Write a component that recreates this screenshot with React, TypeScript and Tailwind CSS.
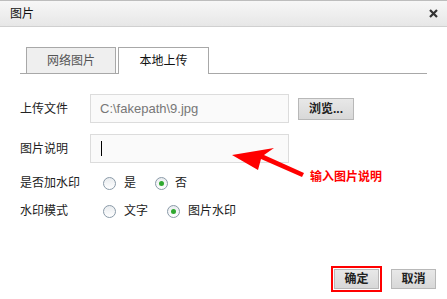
import React from 'react'

const font = { fontFamily: '"Liberation Sans", "Noto Sans CJK SC", sans-serif' }

function Radio({ checked }: { checked?: boolean }) {
  return (
    <span className="inline-flex h-[13px] w-[13px] items-center justify-center rounded-full border border-[#8a9aa8] bg-gradient-to-b from-[#e9ecef] to-white">
      {checked && <span className="h-[5px] w-[5px] rounded-full bg-[#2fa82f]" />}
    </span>
  )
}

function GrayButton({ children, className = '' }: { children: React.ReactNode; className?: string }) {
  return (
    <div className={`flex items-center justify-center border border-[#b8b8b8] bg-gradient-to-b from-[#e8e8e8] to-[#d8d8d8] text-[12px] font-bold text-[#222] ${className}`}>
      {children}
    </div>
  )
}

export default function App() {
  return (
    <div className="relative h-[299px] w-[447px] overflow-hidden bg-white text-[12px] text-[#222]" style={font}>
      {/* title bar */}
      <div className="flex h-[27px] items-center justify-between border-t border-b border-t-[#bdbdbd] border-b-[#d0d0d0] bg-gradient-to-b from-[#f7f7f7] to-[#e7e7e7] pl-[10px] pr-[9px]">
        <span className="text-[12px] text-[#111]">图片</span>
        <svg width="9" height="9" viewBox="0 0 9 9">
          <path d="M1 1 L8 8 M8 1 L1 8" stroke="#333" strokeWidth="2.2" />
        </svg>
      </div>

      {/* tabs */}
      <div className="mx-[20px] mt-[20px] flex items-end border-b border-[#a8a8a8] pl-[6px]">
        <div className="flex h-[26px] w-[90px] items-center justify-center border border-b-0 border-[#a8a8a8] bg-[#efefef] text-[#555]">网络图片</div>
        <div className="ml-[2px] -mb-px flex h-[27px] w-[91px] items-center justify-center border border-b-0 border-[#a8a8a8] bg-white text-[#111]">本地上传</div>
      </div>

      {/* form */}
      <div className="mt-[20px] flex flex-col pl-[20px]">
        <div className="flex h-[29px] items-center">
          <span className="w-[70px]">上传文件</span>
          <div className="flex h-[29px] w-[199px] items-center border border-[#dcdcdc] bg-[#fafafa] pl-[9px] text-[13px] text-[#777]">C:\fakepath\9.jpg</div>
          <GrayButton className="ml-[9px] h-[22px] w-[56px]">浏览...</GrayButton>
        </div>
        <div className="mt-[11px] flex h-[29px] items-center">
          <span className="w-[70px]">图片说明</span>
          <div className="flex h-[29px] w-[199px] items-center border border-[#dcdcdc] bg-[#fafafa] pl-[10px]">
            <span className="h-[15px] w-px bg-black" />
          </div>
        </div>
        <div className="mt-[12px] flex h-[16px] items-center">
          <span className="w-[83px]">是否加水印</span>
          <Radio />
          <span className="ml-[8px] w-[31px]">是</span>
          <Radio checked />
          <span className="ml-[7px]">否</span>
        </div>
        <div className="mt-[12px] flex h-[16px] items-center">
          <span className="w-[83px]">水印模式</span>
          <Radio />
          <span className="ml-[8px] w-[43px]">文字</span>
          <Radio checked />
          <span className="ml-[8px]">图片水印</span>
        </div>
      </div>

      {/* annotation arrow */}
      <svg className="absolute left-[228px] top-[146px]" width="80" height="34" viewBox="0 0 80 34">
        <path d="M4 9 L46 2 L36 9 L76 27 L74 31 L33 13 L30 24 Z" fill="#ff0000" />
      </svg>
      <span className="absolute left-[310px] top-[168px] text-[12px] font-bold text-[#ff0000]">输入图片说明</span>

      {/* footer buttons */}
      <div className="absolute left-[331px] top-[266px] flex items-center">
        <div className="border-2 border-[#ff0000] p-[1px]">
          <GrayButton className="h-[20px] w-[45px]">确定</GrayButton>
        </div>
        <GrayButton className="ml-[9px] h-[20px] w-[45px]">取消</GrayButton>
      </div>
    </div>
  )
}
